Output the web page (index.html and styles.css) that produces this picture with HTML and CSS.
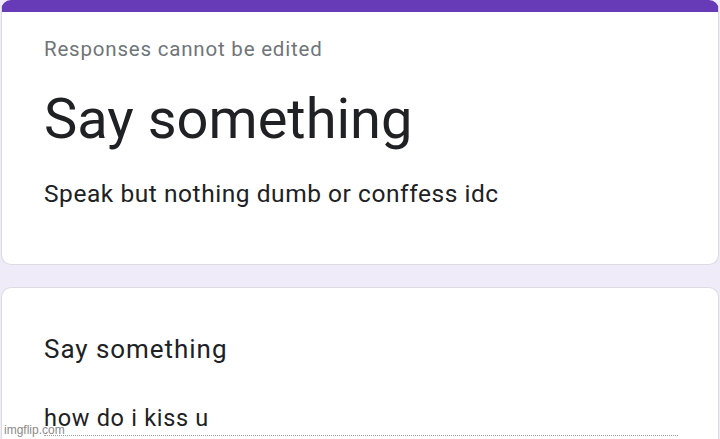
FILE: index.html
```html
<!DOCTYPE html>
<html>
<head>
<meta charset="utf-8">
<link rel="stylesheet" href="styles.css">
</head>
<body>
<div class="page">
  <div class="card header-card">
    <div class="header-body">
      <div class="note">Responses cannot be edited</div>
      <h1 class="title">Say something</h1>
      <div class="desc">Speak but nothing dumb or conffess idc</div>
    </div>
  </div>
  <div class="card question-card">
    <div class="question">Say something</div>
    <div class="answer">how do i kiss u</div>
  </div>
</div>
<div class="watermark">imgflip.com</div>
</body>
</html>
```
FILE: styles.css
```css
html, body {
  margin: 0;
  padding: 0;
  background: #efebf8;
  font-family: Roboto, "Noto Sans", sans-serif;
  color: #202124;
  overflow: hidden;
  height: 439px;
}
.page {
  display: flex;
  flex-direction: column;
  gap: 22px;
  padding: 0 1px;
}
.card {
  background: #fff;
  border: 1px solid #dadce0;
  border-radius: 10px;
  box-sizing: border-box;
}
.header-card {
  border-top: 12px solid #673ab7;
  height: 265px;
  flex-shrink: 0;
}
.header-body {
  padding: 25px 42px 0;
}
.note {
  font-size: 20.5px;
  letter-spacing: 0.8px;
  color: #70757a;
  line-height: 24px;
}
.title {
  margin: 25px 0 0;
  font-weight: 400;
  font-size: 56px;
  line-height: 66px;
}
.desc {
  margin-top: 27px;
  font-size: 24.5px;
  letter-spacing: 0.55px;
  line-height: 30px;
}
.question-card {
  padding: 45px 42px 0;
  height: 152px;
  border-bottom: none;
  border-radius: 10px 10px 0 0;
  flex-shrink: 0;
}
.question {
  font-size: 26px;
  letter-spacing: 0.95px;
  line-height: 32px;
}
.answer {
  margin-top: 38px;
  font-size: 23.5px;
  letter-spacing: 0.7px;
  line-height: 30px;
  padding-bottom: 2px;
  width: 634px;
  border-bottom: 1px dotted #9e9e9e;
}
.watermark {
  position: absolute;
  left: 4px;
  top: 423px;
  font-family: "Liberation Sans", Arial, sans-serif;
  font-size: 12px;
  color: #8a8a8a;
}
```
